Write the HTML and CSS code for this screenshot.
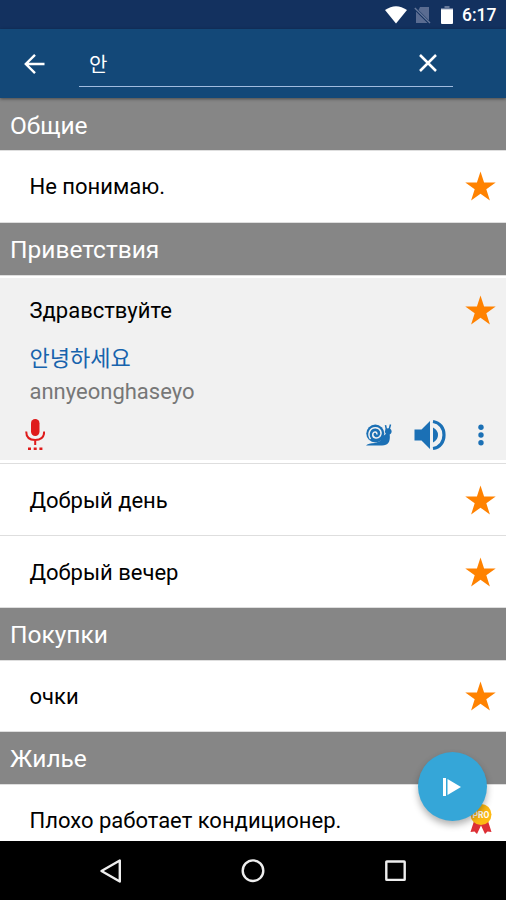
FILE: index.html
```html
<!DOCTYPE html>
<html lang="ru">
<head>
<meta charset="utf-8">
<title>Разговорник</title>
<link rel="stylesheet" href="styles.css">
</head>
<body>
<svg class="defs" width="0" height="0"><symbol id="star" viewBox="0 0 32 32"><path d="M16 .5 19.700 11.800H31.700L22 18.900 25.700 30.500 16 23.400 6.300 30.500 10 18.900 .3 11.800H12.300Z" fill="#ff8200"/></symbol></svg>
<div class="screen">
  <div class="status">
    <svg width="22" height="18" viewBox="0 0 22 18"><path d="M0 4Q11-3.600 22 4L11 17.500Z" fill="#fff"/></svg>
    <svg class="sim" width="17" height="18" viewBox="0 0 17 18"><path d="M6 1H15V14.500L4.500 4ZM2 5.500 13.500 17H2Z" fill="#5a6c91"/><path d="M.8 2 16 17" stroke="#66789a" stroke-width="1.400"/></svg>
    <svg class="battery" width="12" height="18" viewBox="0 0 12 18"><path d="M3.500 0h5v2H12v1.500H0V2h3.500z" fill="#66789a"/><path d="M0 3.300h12V17q0 1-1 1H1q-1 0-1-1z" fill="#fff"/></svg>
    <span class="clock">6:17</span>
  </div>
  <header class="appbar">
    <svg class="back" width="22" height="22" viewBox="0 0 22 22" fill="none" stroke="#fff" stroke-width="2.400"><path d="M20.500 11H3M11 1.800 1.800 11l9.200 9.200"/></svg>
    <div class="search"><span>안</span><svg width="18" height="18" viewBox="0 0 18 18" stroke="#fff" stroke-width="2.500"><path d="M1 1 17 17M17 1 1 17"/></svg></div>
  </header>
  <main class="list">
    <h2 class="first">Общие</h2>
    <div class="row"><span>Не понимаю.</span><svg class="star"><use href="#star"/></svg></div>
    <h2>Приветствия</h2>
    <section class="open">
      <div class="row"><span>Здравствуйте</span><svg class="star"><use href="#star"/></svg></div>
      <p class="korean">안녕하세요</p>
      <p class="roman">annyeonghaseyo</p>
      <div class="actions">
        <svg class="mic" width="20" height="32" viewBox="0 0 20 32"><rect x="6" y="0" width="8.500" height="17" rx="4.200" fill="#df1b1b"/><path d="M1.200 12.500q0 8.500 9 8.500t9-8.500M10.200 21v5" fill="none" stroke="#df1b1b" stroke-width="2"/><path d="M3 28.500h3v2.500H3zm5.700 0h3v2.500h-3zm5.700 0h3v2.500h-3z" fill="#df1b1b"/></svg>
        <svg class="snail" width="28" height="26" viewBox="0 0 28 26"><circle cx="10.300" cy="11.500" r="9" fill="#1b70b5"/><path d="M1 23.500Q3 21.200 10 21L18 19Q21 16 21 12Q19 9.500 20.500 7.300Q23 5.500 25.500 7Q27.500 9 26 11.500L24.700 12.500Q26 23.500 17 23.500Z" fill="#1b70b5"/><path d="M17 15 22 11 24 17 20 22H9L15 19Z" fill="#1b70b5"/><path d="M21.500 8 20.500 3.200M24 8 25.500 2.500" stroke="#1b70b5" stroke-width="1.500"/><path d="M5.500 17C2 12 5 5.500 10.600 5.700 15.500 6 17.500 11 14.800 14.500 12 17.500 7.200 15.800 7.800 12 8.500 9 12.500 9.500 11.800 12.500" fill="none" stroke="#f1f1f1" stroke-width="1.500"/></svg>
        <svg class="speaker" width="32" height="32" viewBox="0 0 32 32"><path d="M.5 10.500h7L16 2v28l-8.500-8.500h-7zM19 8.500Q24 11 24 16t-5 7.500z" fill="#1b70b5"/><path d="M19 2.500C26 3.500 30 9 30 16S26 28.500 19 29.500" fill="none" stroke="#1b70b5" stroke-width="3.200"/></svg>
        <svg class="more" width="6" height="22" viewBox="0 0 6 22" fill="#1b70b5"><circle cx="3" cy="3.300" r="2.700"/><circle cx="3" cy="11" r="2.700"/><circle cx="3" cy="18.800" r="2.700"/></svg>
      </div>
    </section>
    <div class="row low"><span>Добрый день</span><svg class="star"><use href="#star"/></svg></div>
    <div class="row low"><span>Добрый вечер</span><svg class="star"><use href="#star"/></svg></div>
    <h2>Покупки</h2>
    <div class="row short"><span>очки</span><svg class="star"><use href="#star"/></svg></div>
    <h2>Жилье</h2>
    <div class="row"><span>Плохо работает кондиционер.</span>
      <svg class="pro" width="24" height="32" viewBox="0 0 24 32"><path d="M5 18 1.500 29l4-.5L8 31l4-8.500 4 8.500 2.500-2.500 4 .5L19 18z" fill="#dd2f35"/><circle cx="12" cy="11.500" r="10.500" fill="#fdb913"/><text x="12" y="14.500" text-anchor="middle">PRO</text></svg>
    </div>
  </main>
  <button class="fab" aria-label="Воспроизвести"><svg width="18" height="18" viewBox="0 0 18 18" fill="#fff"><path d="M0 0h3v18H0zM4.500 1 18 9 4.500 17z"/></svg></button>
  <nav class="nav">
    <svg width="24" height="24" viewBox="0 0 24 24"><path d="M2.500 12 20.800 1.500v21z"/></svg>
    <svg width="24" height="24" viewBox="0 0 24 24"><circle cx="12" cy="11.700" r="10.300"/></svg>
    <svg width="24" height="24" viewBox="0 0 24 24"><rect x="3.300" y="2.500" width="18.400" height="18.400" rx=".5"/></svg>
  </nav>
</div>
</body>
</html>
```
FILE: styles.css
```css
* { box-sizing: border-box; }
body { margin: 0; font-family: Roboto, "Noto Sans CJK KR", sans-serif; }
svg { display: block; flex: none; }
.defs { position: absolute; }
.screen { position: relative; width: 506px; height: 900px; display: flex; flex-direction: column; overflow: hidden; background: #fff; }
.status { height: 29px; flex: none; background: #13315f; display: flex; align-items: center; justify-content: flex-end; padding: 1px 10px 0 0; color: #fff; }
.sim { margin-left: 7px; }
.battery { margin-left: 10px; }
.clock { width: 34px; margin-left: 9px; font-size: 17.500px; font-weight: 500; line-height: 28px; white-space: nowrap; }
.appbar { height: 69px; flex: none; background: #134878; display: flex; padding-left: 24px; position: relative; z-index: 1; box-shadow: 0 1px 3px rgba(0,0,0,.45); }
.back { margin-top: 24px; }
.search { width: 374px; height: 58px; margin-left: 33px; padding: 11px 16px 0 10px; border-bottom: 1px solid #a1bce0; display: flex; justify-content: space-between; align-items: center; color: #fff; font-size: 20px; }
.list { flex: 1; min-height: 0; overflow: hidden; }
h2 { margin: 0; height: 53px; padding-left: 10px; background: #868686; border-bottom: 1px solid #dedede; color: #fff; font-size: 24.500px; font-weight: 400; line-height: 53px; }
.first { line-height: 55px; }
.row { height: 72px; padding: 0 10px 0 29.500px; display: flex; align-items: center; justify-content: space-between; border-bottom: 1px solid #dedede; font-size: 22px; color: #000; }
.low { padding-top: 2px; }
.short { height: 71px; }
.star { width: 31px; height: 31px; }
.open { height: 188px; background: #f1f1f1; border-top: 1px solid #fff; border-bottom: 1px solid #dedede; box-shadow: inset 0 1px #fff, inset 0 -3px #fff; }
.open .row { height: 67px; border: 0; }
p { margin: 0; padding-left: 29.500px; font-size: 22px; }
.korean { height: 28px; line-height: 29px; color: #1763ad; }
.roman { height: 39px; line-height: 39px; color: #777; }
.actions { display: flex; align-items: center; height: 48px; padding: 0 22px 0 25px; }
.snail { margin-left: auto; }
.speaker { margin-left: 21px; }
.more { margin-left: 32px; }
.pro { margin: 0 3px 4px 0; }
.pro text { font: 700 8.500px Roboto, sans-serif; fill: #fff; }
.fab { position: absolute; left: 417.500px; top: 752px; width: 69px; height: 69px; padding: 0; border: 0; border-radius: 50%; background: #35a6d8; display: flex; align-items: center; justify-content: center; box-shadow: 0 4px 7px rgba(0,0,0,.3); }
.nav { height: 59px; flex: none; background: #000; display: flex; align-items: center; justify-content: space-between; padding: 0 99px; }
.nav svg { fill: none; stroke: #eee; stroke-width: 2.400; stroke-linejoin: round; }
```
